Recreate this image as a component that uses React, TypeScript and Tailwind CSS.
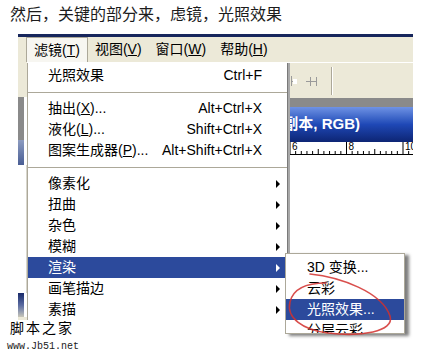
import React from "react";

const font = "font-['Liberation_Sans','Noto_Sans_CJK_SC',sans-serif]";

type Row =
  | { sep: true }
  | {
      sep?: false;
      text: string;
      hot?: string;
      tail?: string;
      keys?: string;
      arrow?: boolean;
      on?: boolean;
    };

const filterRows: Row[] = [
  { text: "光照效果", keys: "Ctrl+F" },
  { sep: true },
  { text: "抽出", hot: "X", tail: "...", keys: "Alt+Ctrl+X" },
  { text: "液化", hot: "L", tail: "...", keys: "Shift+Ctrl+X" },
  { text: "图案生成器", hot: "P", tail: "...", keys: "Alt+Shift+Ctrl+X" },
  { sep: true },
  { text: "像素化", arrow: true },
  { text: "扭曲", arrow: true },
  { text: "杂色", arrow: true },
  { text: "模糊", arrow: true },
  { text: "渲染", arrow: true, on: true },
  { text: "画笔描边", arrow: true },
  { text: "素描", arrow: true },
  { text: "纹理", arrow: true },
];

const renderRows = [
  { text: "3D 变换..." },
  { text: "云彩" },
  { text: "光照效果...", on: true },
  { text: "分层云彩" },
  { text: "镜头光晕..." },
];

const menuBar = [
  { text: "滤镜", hot: "T", open: true },
  { text: "视图", hot: "V" },
  { text: "窗口", hot: "W" },
  { text: "帮助", hot: "H" },
];

function Arrow({ white }: { white?: boolean }) {
  return (
    <svg width="5" height="8" viewBox="0 0 5 8">
      <path d="M0 0L4 4L0 8Z" fill={white ? "#ffffff" : "#000000"} />
    </svg>
  );
}

function Ruler() {
  const ticks = [];
  for (let i = 0; i < 70; i++) {
    const x = 263 - 5.65 * 46 + i * 5.65;
    const major = i % 10 === 6;
    const mid = i % 5 === 1;
    ticks.push(
      <line
        key={i}
        x1={x}
        x2={x}
        y1={major ? 0 : mid ? 7 : 9}
        y2={12.5}
        stroke="#000"
        strokeWidth="1"
      />
    );
  }
  return (
    <svg width="386" height="13" className="block">
      {ticks}
      <line x1="0" x2="386" y1="12.5" y2="12.5" stroke="#000" />
      <text x="265" y="8" fontSize="10" fontFamily="Liberation Sans">6</text>
      <text x="321.5" y="8" fontSize="10" fontFamily="Liberation Sans">8</text>
      <text x="378" y="8" fontSize="10" fontFamily="Liberation Sans">10</text>
    </svg>
  );
}

export default function App() {
  return (
    <div className={`relative w-[433px] h-[358px] overflow-hidden bg-white ${font}`}>
      <div className="h-[34px] pl-[10px] pt-[5px] text-[16px] leading-[20px] text-[#1c1c1c]">
        然后，关键的部分来，虑镜，光照效果
      </div>

      <div className="ml-[18px] w-[395px] h-[286px] flex flex-col">
        <div className="h-[3px] bg-[#17265c]" />
        <div className="h-[25px] bg-[#ece9d8] flex pl-[8px] text-[14px] text-black">
          {menuBar.map((m) => (
            <div
              key={m.text}
              className={`flex items-center px-[7px] ${
                m.open
                  ? "bg-[#f7f6f1] border-l border-t border-r border-[#aca899] px-[6px]"
                  : ""
              }`}
            >
              {m.text}(<u>{m.hot}</u>)
            </div>
          ))}
        </div>

        <div className="flex flex-1">
          <div className="w-[9px] flex flex-col">
            <div className="h-[35px] bg-[#ece9d8]" />
            <div className="h-[43px] w-[6px] bg-[#8a8a8a]" />
            <div className="h-[25px] w-[6px] bg-linear-to-b from-[#8d9cc0] to-[#4a5e94]" />
            <div className="flex-1 border-r border-[#d8d6cc] bg-white" />
            <div className="h-[24px] w-[6px] bg-linear-to-b from-[#1a2a6a] via-[#5a6aa0] to-[#c8c6b8]" />
            <div className="h-[3px] bg-[#ece9d8]" />
          </div>

          <div className="flex-1 flex flex-col">
            <div className="h-[36px] bg-[#ece9d8] border-t border-white flex items-center">
              <svg width="40" height="14" className="ml-[261px]">
                <line x1="3.5" x2="3.5" y1="2" y2="12" stroke="#9a9a9a" />
                <line x1="3.5" x2="9" y1="7.5" y2="7.5" stroke="#9a9a9a" />
                <rect x="5" y="5" width="4" height="5" fill="#fff" />
                <line x1="22.5" x2="22.5" y1="3" y2="12" stroke="#9a9a9a" />
                <line x1="28.5" x2="28.5" y1="3" y2="12" stroke="#9a9a9a" />
                <line x1="18" x2="28.5" y1="7.5" y2="7.5" stroke="#9a9a9a" />
              </svg>
              <div className="ml-[3px] h-[28px] border-l border-[#aca899] border-r border-r-white" />
            </div>
            <div className="h-[9px] bg-[#8a8a8a]" />
            <div className="h-[35px] bg-linear-to-b from-[#6f92e4] via-[#1f48b6] to-[#0d2574] flex items-center justify-end pr-[53px] text-white text-[15px] font-bold">
              图层 1 副本, RGB)
            </div>
            <Ruler />
            <div className="flex-1 bg-white" />
          </div>
        </div>
      </div>

      <div className="pl-[10px] text-[14px] leading-[16px] tracking-[2px] text-black">
        脚本之家
      </div>
      <div className="pl-[7px] mt-[2px] font-['Liberation_Mono',monospace] text-[10px] leading-[18px] text-[#222]">
        www.Jb51.net
      </div>

      {/* 滤镜 dropdown */}
      <div className="absolute left-[27px] top-[63px] w-[261px] h-[257px] overflow-hidden bg-white border-l border-[#aca899] border-r border-r-[#7a7a7a] shadow-[2px_0_0_#a8a8a8] pt-[2px] text-[14px] text-black">
        {filterRows.map((r, i) =>
          r.sep ? (
            <div key={i} className="h-[12px] flex items-center">
              <div className="h-px w-full bg-[#aca899]" />
            </div>
          ) : (
            <div
              key={i}
              className={`h-[21px] flex items-center justify-between pl-[20px] ${
                r.arrow ? "pr-[6px]" : "pr-[25px]"
              } ${r.on ? "bg-[#2c4a9c] text-white" : ""}`}
            >
              <span>
                {r.text}
                {r.hot && (
                  <>
                    (<u>{r.hot}</u>)
                  </>
                )}
                {r.tail}
              </span>
              {r.keys && <span>{r.keys}</span>}
              {r.arrow && <Arrow white={r.on} />}
            </div>
          )
        )}
      </div>

      {/* 渲染 submenu */}
      <div className="absolute left-[285px] top-[253px] w-[120px] h-[81px] overflow-hidden bg-white border border-[#aca899] shadow-[4px_2px_3px_rgba(0,0,0,0.5)] pt-[3px] text-[14px] text-black">
        {renderRows.map((r) => (
          <div
            key={r.text}
            className={`h-[21px] flex items-center pl-[21px] ${
              r.on ? "bg-[#2c4a9c] text-white" : ""
            }`}
          >
            {r.text}
          </div>
        ))}
      </div>

      <svg
        className="absolute left-0 top-0 pointer-events-none"
        width="433"
        height="358"
      >
        <path
          d="M310 274 C340 277 382 292 390 316 C395 332 360 337 328 333 C303 330 286 318 290 302 C293 289 306 283 326 283"
          fill="none"
          stroke="#d2302e"
          strokeWidth="1.6"
          strokeLinecap="round"
          opacity="0.85"
        />
      </svg>
    </div>
  );
}
